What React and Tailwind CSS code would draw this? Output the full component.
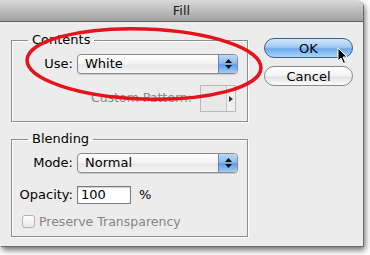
import React from "react";

function Stepper() {
  return (
    <div className="w-[19px] h-full flex flex-col items-center justify-center gap-[2px] rounded-r-[4px] border-l border-[#5a86c4] bg-[linear-gradient(to_bottom,#bcd8f6_0%,#8ebcee_45%,#5f9de6_55%,#9fcdf7_100%)]">
      <svg width="7" height="4" viewBox="0 0 7 4"><path d="M3.5 0 L7 4 L0 4 Z" fill="#111" /></svg>
      <svg width="7" height="4" viewBox="0 0 7 4"><path d="M0 0 L7 0 L3.5 4 Z" fill="#111" /></svg>
    </div>
  );
}

function PopUp({ value }) {
  return (
    <div className="w-[161px] h-[20px] flex items-stretch rounded-[4px] border border-[#8c8c8c] shadow-[0_1px_1px_rgba(0,0,0,0.15)] bg-[linear-gradient(to_bottom,#ffffff_0%,#f3f3f3_50%,#e6e6e6_55%,#f7f7f7_100%)]">
      <div className="flex-1 flex items-center pl-[7px] text-[13px] text-black">{value}</div>
      <Stepper />
    </div>
  );
}

function Group({ title, children }) {
  return (
    <fieldset className="border border-[#8e8e8e] shadow-[1px_1px_0_#fff,inset_1px_1px_0_#fff]">
      <legend className="ml-[16px] px-[4px] text-[13px] leading-[16px] text-black">{title}</legend>
      {children}
    </fieldset>
  );
}

export default function App() {
  return (
    <div className="relative w-[370px] h-[255px] bg-white overflow-hidden font-['DejaVu_Sans',sans-serif]">
      <div className="w-[363px] h-[246px] flex flex-col rounded-tr-[6px] bg-[#ececec] shadow-[1px_1px_0_#6a6a6a,2px_4px_6px_rgba(0,0,0,0.6)]">
        <div className="h-[22px] flex items-center justify-center rounded-tr-[6px] border-b border-[#5e5e5e] bg-[linear-gradient(to_bottom,#d8d8d8_0%,#bdbdbd_50%,#a2a2a2_100%)] text-[13px] text-[#1a1a1a]">
          Fill
        </div>

        <div className="flex pl-[11px] pt-[10px] gap-[16px]">
          <div className="w-[237px] flex flex-col gap-[9px]">
            <Group title="Contents">
              <div className="flex flex-col pt-[6px] pb-[9px] pr-[8px]">
                <div className="flex items-center gap-[4px]">
                  <span className="w-[61px] text-right text-[13px] text-black">Use:</span>
                  <PopUp value="White" />
                </div>
                <div className="mt-[11px] flex items-center justify-end gap-[8px] pr-[3px]">
                  <span className="text-[12.5px] text-[#8a8a8a]">Custom Pattern:</span>
                  <div className="w-[36px] h-[27px] flex border border-[#b9b9b9] bg-[#e8e8e8]">
                    <div className="flex-1" />
                    <div className="w-[9px] flex items-center justify-center border-l border-[#c8c8c8] bg-[#f0f0f0]">
                      <svg width="4" height="6" viewBox="0 0 4 6"><path d="M0 0 L4 3 L0 6 Z" fill="#333" /></svg>
                    </div>
                  </div>
                </div>
              </div>
            </Group>

            <Group title="Blending">
              <div className="flex flex-col pt-[6px] pb-[7px] pr-[8px]">
                <div className="flex items-center gap-[4px]">
                  <span className="w-[61px] text-right text-[13px] text-black">Mode:</span>
                  <PopUp value="Normal" />
                </div>
                <div className="mt-[12px] flex items-center gap-[4px]">
                  <span className="w-[61px] text-right text-[13px] text-black">Opacity:</span>
                  <div className="w-[54px] h-[18px] flex items-center pl-[3px] border border-[#7c7c7c] bg-white shadow-[inset_0_1px_1px_rgba(0,0,0,0.2)] text-[13px] text-black">
                    100
                  </div>
                  <span className="ml-[4px] text-[13px] text-black">%</span>
                </div>
                <div className="mt-[10px] flex items-center gap-[4px] pl-[10px]">
                  <div className="w-[13px] h-[13px] rounded-[3px] border border-[#b4b4b4] bg-[linear-gradient(to_bottom,#ffffff,#e9e9e9)]" />
                  <span className="text-[12.5px] leading-[14px] text-[#858585]">Preserve Transparency</span>
                </div>
              </div>
            </Group>
          </div>

          <div className="w-[89px] pt-[6px] flex flex-col gap-[8px]">
            <button className="h-[20px] rounded-full border border-[#3d5e93] bg-[linear-gradient(to_bottom,#d4e7fb_0%,#a2c9f3_45%,#6ea8ea_55%,#aad5fa_100%)] text-[13px] leading-none text-black">
              OK
            </button>
            <button className="h-[20px] rounded-full border border-[#8a8a8a] bg-[linear-gradient(to_bottom,#ffffff_0%,#f4f4f4_50%,#e2e2e2_55%,#fbfbfb_100%)] text-[13px] leading-none text-black">
              Cancel
            </button>
          </div>
        </div>
      </div>

      <svg className="absolute left-0 top-0 pointer-events-none" width="370" height="255" viewBox="0 0 370 255">
        <ellipse cx="144" cy="64" rx="117" ry="35" transform="rotate(2 144 64)" fill="none" stroke="#e5131b" strokeWidth="3.5" />
      </svg>

      <svg className="absolute left-[337px] top-[47px] pointer-events-none" width="12" height="18" viewBox="0 0 12 18">
        <path d="M1 1 L1 14 L4 11 L6.5 16.5 L8.5 15.5 L6 10 L10 10 Z" fill="#000" stroke="#fff" strokeWidth="1" strokeLinejoin="round" />
      </svg>
    </div>
  );
}
